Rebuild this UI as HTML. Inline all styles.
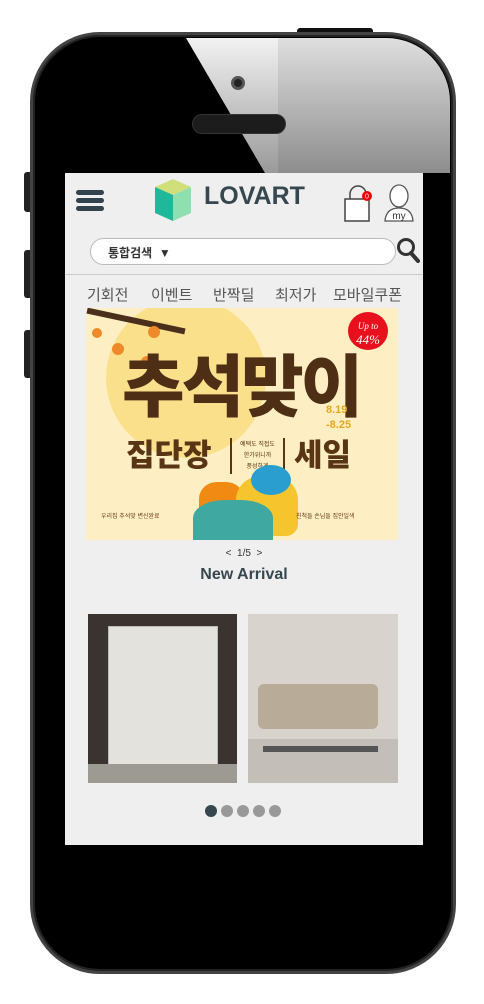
<!DOCTYPE html>
<html><head><meta charset="utf-8"><style>
*{margin:0;padding:0;box-sizing:border-box}
body{width:484px;height:1004px;background:#fff;position:relative;overflow:hidden;font-family:"Liberation Sans","Noto Sans CJK KR",sans-serif}
.phone{position:absolute;left:30px;top:32px;width:426px;height:942px;border-radius:70px;background:#000;border:3px solid #444;box-shadow:inset 0 0 0 2px #222}
.glass{position:absolute;left:36px;top:38px;width:414px;height:930px;border-radius:64px;overflow:hidden}
.hl{position:absolute;left:0;top:0;width:414px;height:135px;background:linear-gradient(180deg,#f2f2f2,#bdbdbd 60%,#9a9a9a);clip-path:polygon(150px 0,414px 0,414px 135px,229px 135px)}
.hl2{position:absolute;left:242px;top:0;width:172px;height:135px;background:rgba(0,0,0,.08)}
.btn{position:absolute;background:#222;border-radius:3px}
.screen{position:absolute;left:65px;top:173px;width:358px;height:672px;background:#efefef}
.cam{position:absolute;left:231px;top:76px;width:14px;height:14px;border-radius:50%;background:#222;border:3px solid #555}
.slot{position:absolute;left:192px;top:114px;width:94px;height:20px;border-radius:10px;background:#1c1c1c;border:1px solid #333}
</style></head><body>
<div class="btn" style="left:24px;top:172px;width:10px;height:40px"></div>
<div class="btn" style="left:24px;top:250px;width:10px;height:48px"></div>
<div class="btn" style="left:24px;top:330px;width:10px;height:48px"></div>
<div class="btn" style="left:297px;top:28px;width:76px;height:8px;background:#111"></div>
<div class="phone"></div>
<div class="glass"><div class="hl"></div><div class="hl2"></div></div>
<div class="cam"></div>
<div class="slot"></div>
<div class="screen">
  <div style="position:absolute;left:11px;top:17px;width:28px">
    <div style="height:5px;background:#33434d;border-radius:3px;margin-bottom:3px"></div>
    <div style="height:5px;background:#33434d;border-radius:3px;margin-bottom:3px"></div>
    <div style="height:5px;background:#33434d;border-radius:3px"></div>
  </div>
  <svg style="position:absolute;left:88px;top:4px" width="40" height="46" viewBox="0 0 40 46">
    <polygon points="20,2 38,10 20,18 2,10" fill="#cfe07a"/>
    <polygon points="2,10 20,18 20,44 2,36" fill="#1fb89a"/>
    <polygon points="20,18 38,10 38,36 20,44" fill="#8fe0b0"/>
  </svg>
  <div style="position:absolute;left:139px;top:9px;font-size:25px;font-weight:bold;color:#37474f">LOVART</div>
  <svg style="position:absolute;left:278px;top:11px" width="30" height="38" viewBox="0 0 30 38">
    <path d="M7 16 V10 a8 8 0 0 1 16 0 V16" fill="none" stroke="#444" stroke-width="1.5"/>
    <rect x="2" y="15" width="24" height="22" fill="#fff" stroke="#444" stroke-width="1.5"/>
    <circle cx="24" cy="12" r="5" fill="#e00"/><text x="24" y="14.5" font-size="7" fill="#fff" text-anchor="middle" font-family="Liberation Sans">0</text>
  </svg>
  <svg style="position:absolute;left:318px;top:11px" width="32" height="38" viewBox="0 0 32 38">
    <ellipse cx="16" cy="12" rx="9" ry="11" fill="#fff" stroke="#555" stroke-width="1.3"/>
    <path d="M2 37 Q3 24 16 24 Q29 24 30 37 Z" fill="#fff" stroke="#555" stroke-width="1.3"/>
    <text x="16" y="35" font-size="10" fill="#333" text-anchor="middle" font-family="Liberation Sans">my</text>
  </svg>
  <div style="position:absolute;left:25px;top:65px;width:306px;height:27px;background:#fff;border:1px solid #bbb;border-radius:14px;font-size:12px;font-weight:bold;color:#333;padding:5px 0 0 17px">통합검색 &nbsp;▼</div>
  <svg style="position:absolute;left:331px;top:64px" width="24" height="26" viewBox="0 0 24 26"><circle cx="10" cy="10" r="7.5" fill="none" stroke="#333" stroke-width="3"/><line x1="15" y1="16" x2="22" y2="24" stroke="#333" stroke-width="4" stroke-linecap="round"/></svg>
  <div style="position:absolute;left:0;top:101px;width:358px;border-top:1px solid #ccc"></div>
  <div style="position:absolute;left:22px;top:111px;font-size:15px;color:#555;white-space:nowrap">
    <span style="position:absolute;left:0">기회전</span><span style="position:absolute;left:64px">이벤트</span><span style="position:absolute;left:126px">반짝딜</span><span style="position:absolute;left:188px">최저가</span><span style="position:absolute;left:246px">모바일쿠폰</span>
  </div>
  <div style="position:absolute;left:21px;top:135px;width:312px;height:232px;background:#fdefc3;overflow:hidden">
    <div style="position:absolute;left:20px;top:-10px;width:160px;height:160px;border-radius:50%;background:#fbe08c"></div>
    <div style="position:absolute;left:0;top:10px;width:100px;height:6px;background:#4a2f1d;transform:rotate(12deg)"></div>
    <div style="position:absolute;left:6px;top:20px;width:10px;height:10px;border-radius:50%;background:#ee8a2a"></div>
    <div style="position:absolute;left:26px;top:35px;width:12px;height:12px;border-radius:50%;background:#ee8a2a"></div>
    <div style="position:absolute;left:55px;top:48px;width:12px;height:12px;border-radius:50%;background:#ee8a2a"></div>
    <div style="position:absolute;left:62px;top:18px;width:12px;height:12px;border-radius:50%;background:#ee8a2a"></div>
    <div style="position:absolute;left:262px;top:4px;width:40px;height:38px;border-radius:50%;background:#e8101c;color:#fff;font-size:13px;font-style:italic;text-align:center;line-height:13px;padding-top:6px;font-family:'Liberation Serif',serif"><span style="font-size:9px">Up to</span><br>44%</div>
    <div style="position:absolute;left:36px;top:34px;font-size:68px;font-weight:900;color:#4e2e14;letter-spacing:-3px;font-family:'Noto Sans CJK KR',sans-serif;line-height:80px">추석맞이</div>
    <div style="position:absolute;left:240px;top:95px;font-size:11px;font-weight:bold;color:#e6a71e;line-height:15px">8.19<br>-8.25</div>
    <div style="position:absolute;left:40px;top:125px;font-size:31px;font-weight:900;color:#5a3515;font-family:'Noto Sans CJK KR',sans-serif;line-height:40px">집단장</div>
    <div style="position:absolute;left:144px;top:130px;width:55px;height:36px;border-left:2px solid #5a3515;border-right:2px solid #5a3515;font-size:6px;color:#5a3515;text-align:center;line-height:11px;padding-top:2px">예택도 직접도<br>한가위니까<br>풍성하게</div>
    <div style="position:absolute;left:208px;top:125px;font-size:31px;font-weight:900;color:#5a3515;font-family:'Noto Sans CJK KR',sans-serif;line-height:40px">세일</div>
    <div style="position:absolute;left:113px;top:174px;width:45px;height:42px;border-radius:40% 40% 20% 20%;background:#f08a12"></div>
    <div style="position:absolute;left:150px;top:168px;width:62px;height:60px;border-radius:40% 40% 20% 20%;background:#f6c52e"></div>
    <div style="position:absolute;left:165px;top:157px;width:40px;height:30px;border-radius:50%;background:#2a9fcf"></div>
    <div style="position:absolute;left:107px;top:192px;width:80px;height:45px;border-radius:40% 40% 10% 10%;background:#3fa8a0"></div>
    <div style="position:absolute;left:15px;top:203px;font-size:6px;color:#6b3b1b">우리집 추석맞 변신완료</div>
    <div style="position:absolute;left:210px;top:203px;font-size:6px;color:#6b3b1b">친척들 손님들 집안일색</div>
  </div>
  <div style="position:absolute;left:0;top:375px;width:358px;text-align:center;font-size:10px;color:#333">&lt;&nbsp; 1/5 &nbsp;&gt;</div>
  <div style="position:absolute;left:0;top:393px;width:358px;text-align:center;font-size:16px;font-weight:bold;color:#37474f">New Arrival</div>
  <div style="position:absolute;left:23px;top:441px;width:149px;height:169px;background:#3a3330;overflow:hidden">
    <div style="position:absolute;left:20px;top:12px;width:110px;height:140px;background:#e4e2dc;border:1px solid #bbb"></div>
    <div style="position:absolute;left:0;top:150px;width:149px;height:19px;background:#9d9a94"></div>
  </div>
  <div style="position:absolute;left:183px;top:441px;width:150px;height:169px;background:#d8d4cd;overflow:hidden">
    <div style="position:absolute;left:10px;top:70px;width:120px;height:45px;background:#b8ab98;border-radius:6px"></div>
    <div style="position:absolute;left:0;top:125px;width:150px;height:44px;background:#c3bfb8"></div>
    <div style="position:absolute;left:15px;top:132px;width:115px;height:6px;background:#555"></div>
  </div>
  <div style="position:absolute;left:140px;top:632px;display:flex;gap:4px">
    <div style="width:12px;height:12px;border-radius:50%;background:#37474f"></div>
    <div style="width:12px;height:12px;border-radius:50%;background:#999"></div>
    <div style="width:12px;height:12px;border-radius:50%;background:#999"></div>
    <div style="width:12px;height:12px;border-radius:50%;background:#999"></div>
    <div style="width:12px;height:12px;border-radius:50%;background:#999"></div>
  </div>
</div>
</body></html>
